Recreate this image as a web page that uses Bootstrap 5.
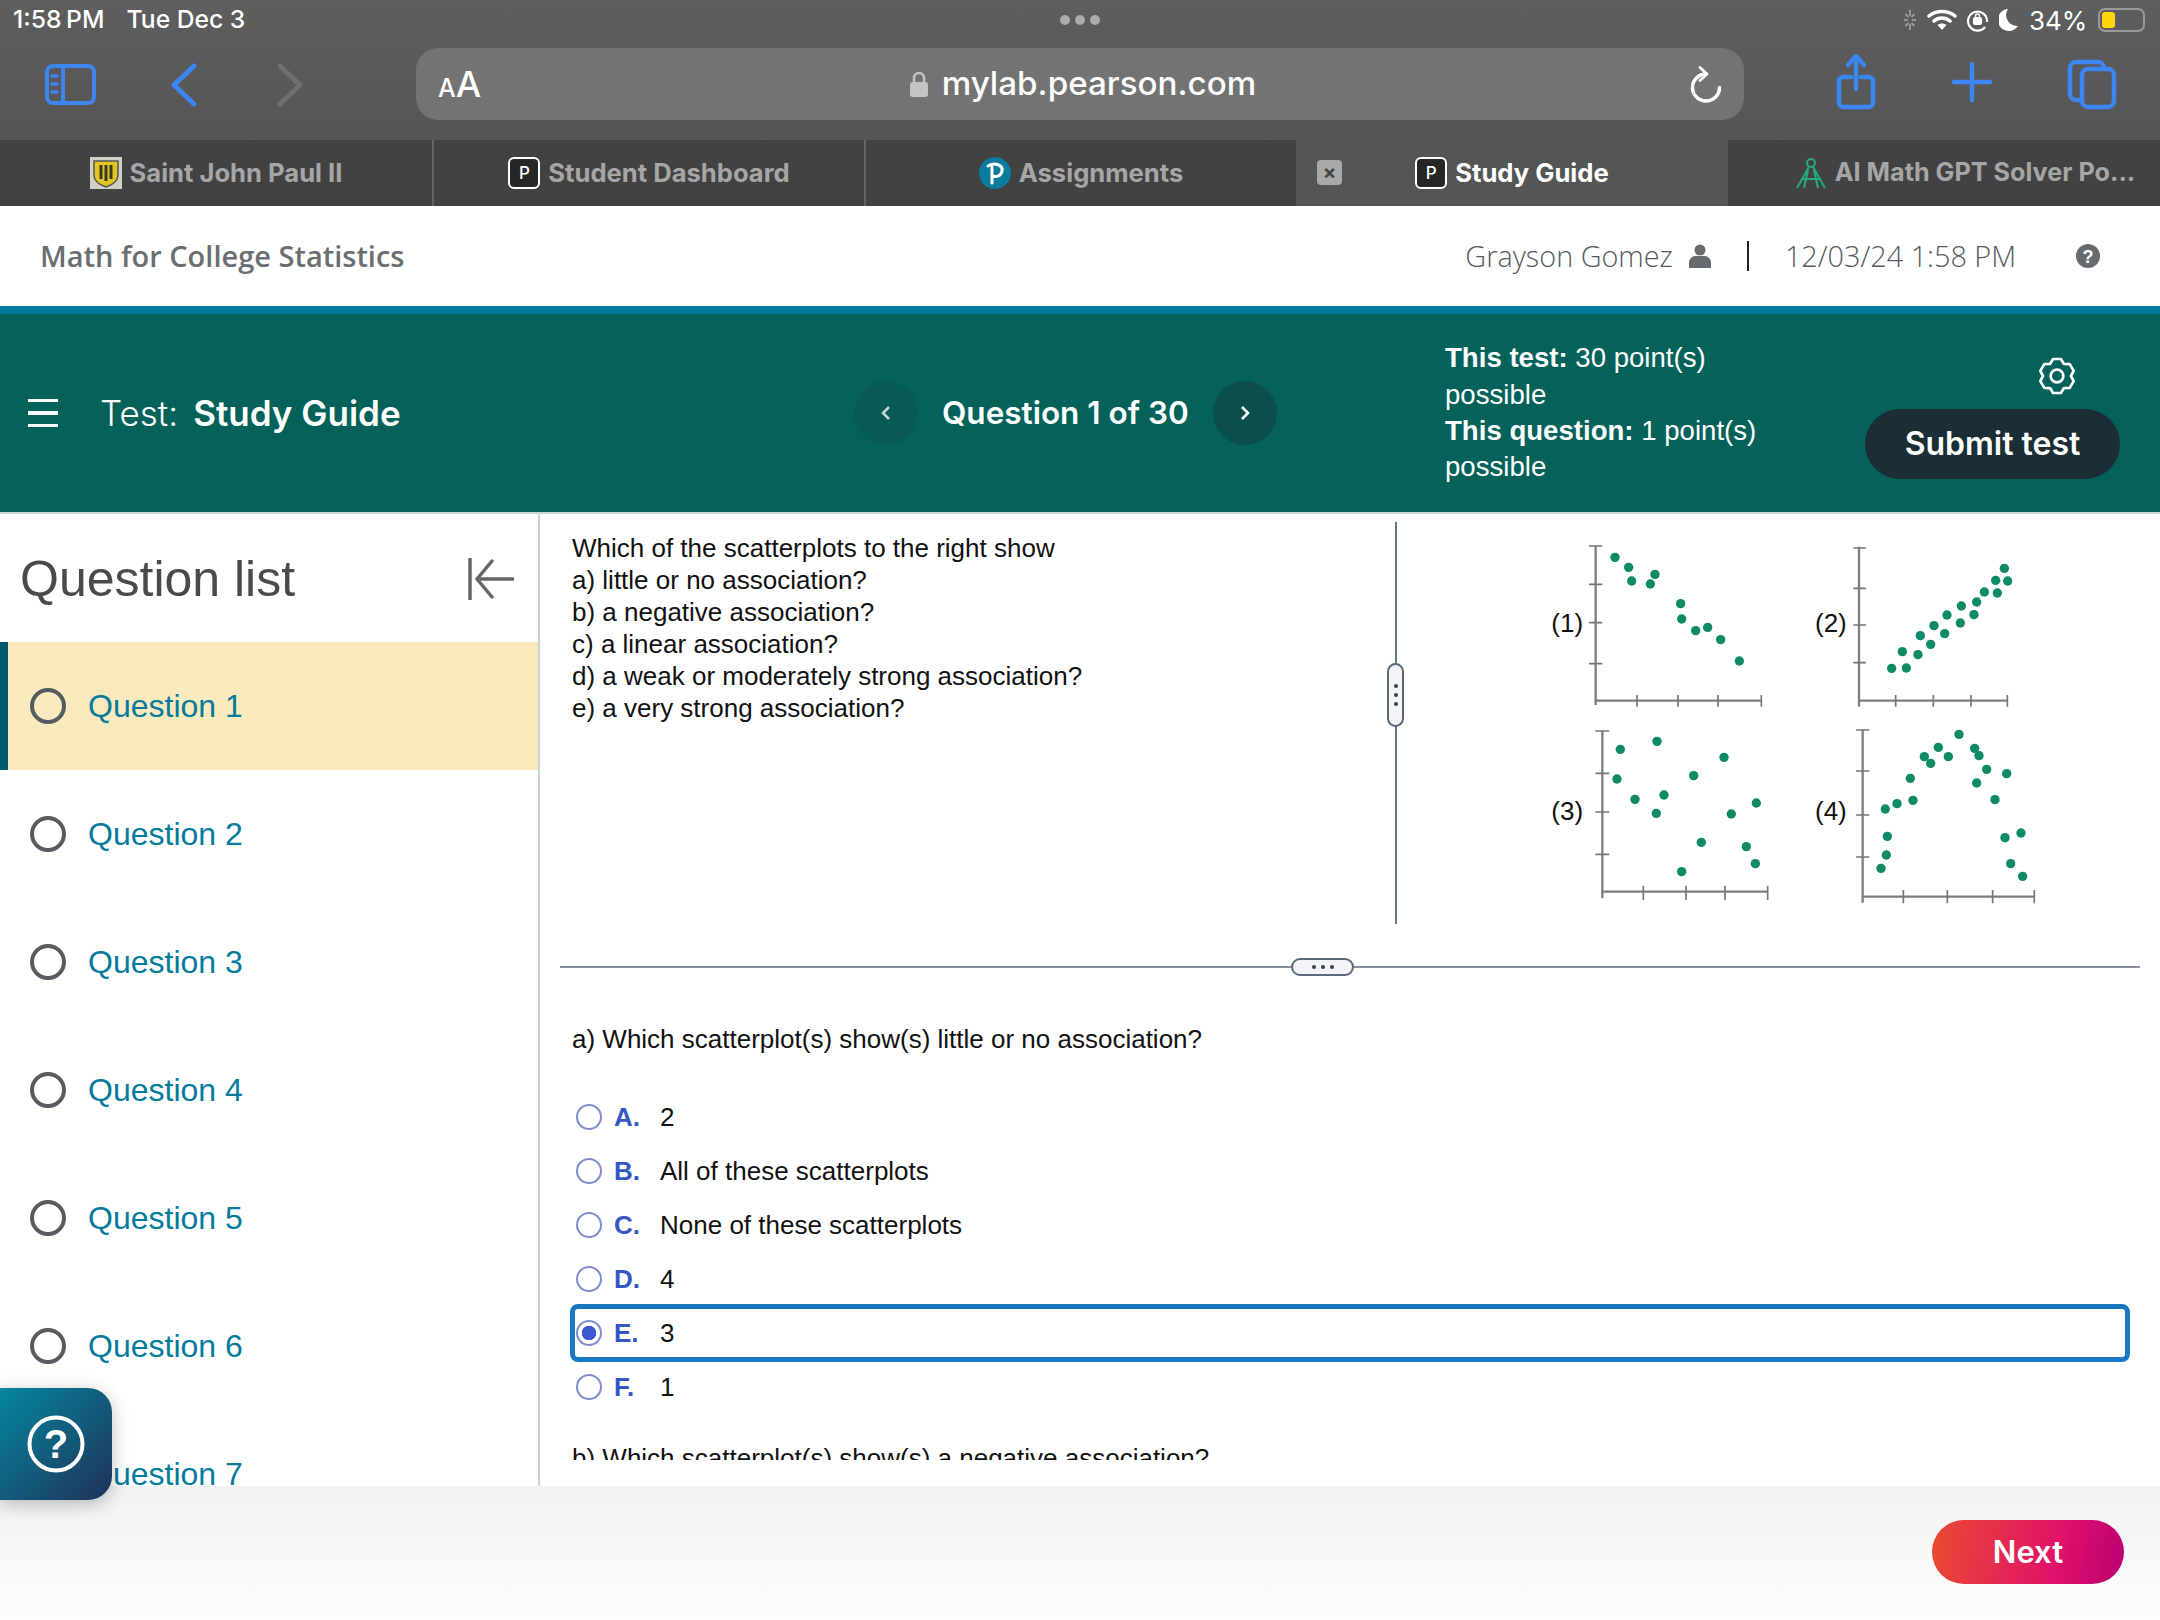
<!DOCTYPE html>
<html lang="en">
<head>
<meta charset="utf-8">
<title>Study Guide</title>
<link href="https://cdn.jsdelivr.net/npm/bootstrap@5.3.0/dist/css/bootstrap.min.css" rel="stylesheet">
<style>
html,body{height:100%;margin:0;overflow:hidden;background:#fff}
.app{width:2160px;height:1620px;position:relative;font-family:"Liberation Sans",Arial,sans-serif}
.chrome-top{height:140px;background:linear-gradient(#5e5e5e,#555);color:#fff;font-family:Inter,sans-serif}
.status-row{height:40px;padding:0 13px;font-size:24.7px;font-weight:500}
.status-time{margin-right:22px;word-spacing:-2px}
.status-mid{left:1060px;top:15px;gap:5px}
.status-mid i{display:block;width:10px;height:10px;border-radius:50%;background:#ababab}
.status-right{left:1903px;top:5px;height:30px;gap:10px;font-size:26px}
.batt{width:47px;height:24px;border:2px solid #9a9a9a;border-radius:7px;padding:2px;margin-left:1px}
.batt i{display:block;width:13px;height:100%;background:#ffd60a;border-radius:3px}
.tool-row{height:100px}
.tool-ic{left:0;top:0}
.tool-right{left:1820px}
.addr{left:416px;top:8px;width:1328px;height:72px;border-radius:22px;background:#737373;padding:0 22px 0 22px}
.aa{font-size:36px;font-weight:500;line-height:1}
.aa small{font-size:25px}
.addr-url{left:6px;right:0;top:0;bottom:0;gap:14px;font-size:33.2px;font-weight:500}
.tabs-row{height:66px;background:#424242;font-family:Inter,sans-serif;font-size:25.6px;font-weight:700;color:#a6a6a6}
.tab-cell{width:432px;position:relative;gap:8px;white-space:nowrap}
.tab-cell:nth-child(2),.tab-cell:nth-child(3){border-left:2px solid #646464}
.tab-now{background:#555;color:#fff}
.tab-last{padding-left:42px;font-size:25.2px}
.tab-x{position:absolute;left:21px;top:20px;width:25px;height:25px;background:#a9a9a9;border-radius:4px;color:#444;font-size:20px;line-height:24px;text-align:center}
.p-box{width:32px;height:32px;border:2px solid #fff;border-radius:6px;background:#262626;color:#fff;font-size:17px;font-weight:500;line-height:28px;text-align:center;flex:none}
.page-head{height:100px;padding:0 60px 0 40px;font-family:"Open Sans",sans-serif;font-size:28.8px;font-weight:300;color:#565a5e}
.page-title{font-size:29px;font-weight:600;color:#6a6e71}
.head-bar{width:2px;height:30px;background:#222;margin:0 36px}
.head-help{margin-left:60px}
.band{height:208px;border-top:8px solid #007a9c;border-bottom:2px solid #c9d6d6;background:#05625a;color:#fff;font-family:Inter,sans-serif}
.band-left{width:854px;padding-left:28px;font-size:35px}
.burger{width:30px;gap:9px;margin-right:42px}
.burger i{display:block;height:3.5px;background:#fff}
.band-left span{font-weight:300;margin-right:15px}
.band-left b{font-weight:600}
.band-nav{width:591px;gap:24px;font-size:31.5px;font-weight:600}
.round-btn{width:64px;height:64px;border-radius:50%;padding:0;background:#0a4f4c;border:0;flex:none}
.round-dim{background:#085a54}
.band-pts{width:420px;font-family:"Liberation Sans",sans-serif;font-size:27.6px;line-height:36.3px;font-weight:400}
.band-pts b{font-weight:700}
.band-act{width:255px;margin-top:10px}
.btn-submit{width:255px;height:70px;background:#1b2d35;color:#fff;font-size:32px;font-weight:600;border:0;margin-top:14px}
.gear-shift{transform:translateX(64px)}
.main-row{height:972px;overflow:hidden}
.side{width:540px;flex:none;border-right:2px solid #c9d0e0;font-family:"Liberation Sans",sans-serif}
.side-head{height:128px;flex:none;padding:2px 24px 0 20px;font-size:50px;color:#4a4a4a}
.list-group .q-item{height:128px;padding:0 0 0 30px;gap:22px;border:0;font-size:32px;color:#047a9c;flex:none}
.q-item i{display:block;width:36px;height:36px;border-radius:50%;border:4px solid #565b60;flex:none}
.list-group .q-now{background:#f9e9bc;border-left:8px solid #005a70;padding-left:22px}
.pane{flex:1;min-width:0}
.upper{height:452px;flex:none;font-size:26px;line-height:32px;color:#111}
.upper-text{width:855px;padding:18px 0 0 32px;flex:none}
.v-rule{width:2px;height:402px;margin-top:8px;background:#6b7683;position:relative;flex:none}
.v-grip{position:absolute;left:-8px;top:141px;width:17px;height:64px;background:#f2f4f7;border:2px solid #5a6a7a;border-radius:9px;gap:5px}
.v-grip i,.h-grip i{display:block;width:4px;height:4px;border-radius:50%;background:#34404c}
.fig{width:560px;height:420px;margin:6px 0 0 103px;flex:none}
.fig text{font-family:"Liberation Sans",sans-serif;font-size:78px;fill:#111}
.fig .ax{stroke:#7f7f7f;stroke-width:7;fill:none}
.fig .tk{stroke:#777;stroke-width:5;fill:none}
.fig circle{fill:#0f8a66}
.h-rule{height:2px;margin:0 20px;background:#8590a0;position:relative;flex:none}
.h-grip{position:absolute;left:731px;top:-8px;width:63px;height:18px;background:#f2f4f7;border:2px solid #5a6a7a;border-radius:9px;gap:5px}
.lower{height:492px;overflow:hidden;padding:55px 32px 0 32px;font-size:26px;line-height:32px;color:#111;flex:none}
.ask{margin-bottom:35px}
.opt{height:54px;padding-left:4px}
.opt input{width:26px;height:26px;margin:0 12px 0 0;border:2.5px solid #7d8cd0;background:#fff;flex:none}
.opt input:checked{background-color:#fff;background-image:radial-gradient(circle,#3a5ad2 0 7px,#fff 7.5px);border-color:#7d8cd0}
.opt b{width:46px;color:#3557c4;flex:none}
.opt-on{outline:5px solid #1a78c2;outline-offset:-3px;border-radius:6px}
.ask-b{margin-top:28px}
.foot{height:134px;background:linear-gradient(#f1f2f3,#fdfdfd);padding:34px 36px 0 0}
.btn-next{width:192px;height:64px;background:linear-gradient(100deg,#ea4b2f,#e0116a 65%,#b80072);color:#fff;border:0;font-family:Inter,sans-serif;font-size:31px;font-weight:600}
.help-fab{position:absolute;left:0;top:1388px;width:112px;height:112px;border-radius:0 24px 24px 0;background:linear-gradient(135deg,#05869f,#1f3158);box-shadow:0 4px 18px rgba(0,0,0,.25)}
.help-fab text{font-family:"Liberation Sans",sans-serif;font-size:40px;font-weight:700;fill:#fff}
</style>
</head>
<body>
<div class="app d-flex flex-column">

  <div class="chrome-top position-relative">
    <div class="status-row d-flex align-items-center">
      <span class="status-time">1:58 PM</span><span>Tue Dec 3</span>
    </div>
    <div class="status-mid position-absolute d-flex"><i></i><i></i><i></i></div>
    <div class="status-right position-absolute d-flex align-items-center">
      <svg width="14" height="22" viewBox="0 0 14 22" stroke="#a8a8a8" stroke-width="1.6"><path d="M7 1v6M7 15v6M1 11h4M9 11h4M2.5 5l3 3M8.5 14l3 3M11.500 5l-3 3M5.500 14l-3 3"/></svg>
      <svg width="30" height="24" viewBox="0 0 30 24" fill="none" stroke="#fff" stroke-width="3.500" stroke-linecap="round"><path d="M2 8c7-6 19-6 26 0M7 13c4.500-4 11.500-4 16 0"/><path d="M15 22l-4.500-5c2.500-2 6.500-2 9 0z" fill="#fff" stroke="none"/></svg>
      <svg width="22" height="24" viewBox="0 0 22 24" fill="none" stroke="#fff" stroke-width="2.200"><path d="M18 19a9.500 9.500 0 1 1 2-7v2"/><rect x="7" y="10" width="7" height="6" rx="1" fill="#fff"/><path d="M8.500 10V8a2 2 0 0 1 4 0v2" stroke-width="1.500"/></svg>
      <svg width="20" height="24" viewBox="0 0 20 24"><path d="M9 1a11 11 0 0 0 10 17A11 11 0 1 1 9 1z" fill="#fff"/></svg>
      <span>34%</span>
      <span class="batt"><i></i></span>
    </div>
    <div class="tool-row position-relative">
      <svg class="tool-ic position-absolute" width="420" height="100" viewBox="0 0 420 100" fill="none" stroke-linecap="round" stroke-linejoin="round">
        <g stroke="#3d85f0" stroke-width="4">
          <rect x="47" y="26" width="47" height="37" rx="6"/><path d="M63 26v37"/><path d="M52 36h5M52 44h5M52 52h5" stroke-width="3.500"/>
          <path d="M194 26l-20 19 20 19" stroke-width="5"/>
        </g>
        <path d="M280 26l20 19-20 19" stroke="#6f6f6f" stroke-width="5"/>
      </svg>
      <div class="addr position-absolute d-flex align-items-center justify-content-between">
        <div class="position-absolute addr-url d-flex align-items-center justify-content-center">
          <svg width="18" height="26" viewBox="0 0 18 26"><path d="M4 11V7a5 5 0 0 1 10 0v4" fill="none" stroke="#c4c4c4" stroke-width="2.500"/><rect y="11" width="18" height="15" rx="3" fill="#c4c4c4"/></svg>
          <span>mylab.pearson.com</span>
        </div>
        <span class="aa position-relative"><small>A</small>A</span>
        <svg class="position-relative" width="32" height="38" viewBox="0 0 32 38" fill="none" stroke="#fff" stroke-width="3.500" stroke-linecap="round" stroke-linejoin="round"><path d="M16 9A13.500 13.500 0 1 0 29.500 22.500"/><path d="M10 2.500l7 6.500-7 6.500" stroke-width="3"/></svg>
      </div>
      <svg class="tool-ic tool-right position-absolute" width="320" height="100" viewBox="0 0 320 100" fill="none" stroke="#3d85f0" stroke-width="4.500" stroke-linecap="round" stroke-linejoin="round">
        <path d="M26 40h-8a4 4 0 0 0-4 4v22a4 4 0 0 0 4 4h26a4 4 0 0 0 4-4V44a4 4 0 0 0-4-4h-8M31 52V20M23 28l8-9 8 9" transform="translate(5 -3)"/>
        <path d="M152 24v36M134 42h36"/>
        <rect x="262" y="29" width="32" height="38" rx="6"/>
        <path d="M262 60h-6a6 6 0 0 1-6-6V28a6 6 0 0 1 6-6h22a6 6 0 0 1 6 6v1"/>
      </svg>
    </div>
  </div>

  <div class="tabs-row d-flex">
    <div class="tab-cell d-flex align-items-center justify-content-center">
      <svg width="32" height="32" viewBox="0 0 32 32"><rect width="32" height="32" fill="#cfcfc4"/><path d="M4 4h24v14c0 7-6 10-12 12C10 28 4 25 4 18z" fill="#e2c520" stroke="#555" stroke-width="1.500"/><path d="M11 8v14M16 8v16M21 8v14" stroke="#3a3a20" stroke-width="3"/></svg>
      <span>Saint John Paul II</span>
    </div>
    <div class="tab-cell d-flex align-items-center justify-content-center">
      <span class="p-box">P</span><span>Student Dashboard</span>
    </div>
    <div class="tab-cell d-flex align-items-center justify-content-center">
      <svg width="32" height="32" viewBox="0 0 32 32"><circle cx="16" cy="16" r="16" fill="#0a7ca0"/><path d="M9 9c7-4 15-1 14 5s-7 6-10 5M13 10v16" fill="none" stroke="#fff" stroke-width="3" stroke-linecap="round"/></svg>
      <span>Assignments</span>
    </div>
    <div class="tab-cell tab-now d-flex align-items-center justify-content-center">
      <span class="tab-x">×</span>
      <span class="p-box">P</span><span>Study Guide</span>
    </div>
    <div class="tab-cell tab-last d-flex align-items-center justify-content-center">
      <svg width="32" height="32" viewBox="0 0 32 32" fill="none" stroke="#27a97a" stroke-width="2"><circle cx="16" cy="6" r="4"/><path d="M14 10L2 31M18 10l12 21M7 22h18M13 13l-4 18M19 13l4 18"/></svg>
      <span>AI Math GPT Solver Po...</span>
    </div>
  </div>

  <header class="page-head d-flex align-items-center justify-content-between bg-white">
    <div class="page-title">Math for College Statistics</div>
    <div class="d-flex align-items-center">
      <span>Grayson Gomez</span>
      <svg class="ms-3" width="22" height="24" viewBox="0 0 22 24" fill="#666b70"><circle cx="11" cy="6" r="5.500"/><path d="M0 24v-5c0-4 3-7 6-7h10c3 0 6 3 6 7v5z"/></svg>
      <span class="head-bar"></span>
      <span>12/03/24 1:58 PM</span>
      <svg class="head-help" width="24" height="24" viewBox="0 0 24 24"><circle cx="12" cy="12" r="12" fill="#666b70"/><text x="12" y="18.500" text-anchor="middle" font-family="Liberation Sans" font-weight="700" font-size="18" fill="#fff">?</text></svg>
    </div>
  </header>

  <section class="band d-flex align-items-center">
    <div class="band-left d-flex align-items-center">
      <div class="burger d-flex flex-column"><i></i><i></i><i></i></div>
      <span>Test:</span><b>Study Guide</b>
    </div>
    <div class="band-nav d-flex align-items-center">
      <button class="round-btn round-dim d-flex align-items-center justify-content-center" type="button" aria-label="Previous"><svg width="10" height="16" viewBox="0 0 10 16" fill="none" stroke="#c8d8d6" stroke-width="2.500"><path d="M8 2L2 8l6 6"/></svg></button>
      <span>Question 1 of 30</span>
      <button class="round-btn d-flex align-items-center justify-content-center" type="button" aria-label="Next"><svg width="10" height="16" viewBox="0 0 10 16" fill="none" stroke="#fff" stroke-width="2.500"><path d="M2 2l6 6-6 6"/></svg></button>
    </div>
    <div class="band-pts">
      <b>This test:</b> 30 point(s)<br>possible<br><b>This question:</b> 1 point(s)<br>possible
    </div>
    <div class="band-act d-flex flex-column align-items-center">
      <svg class="gear-shift" width="38" height="38" viewBox="0 0 24 24" fill="none" stroke="#fff" stroke-width="1.700" stroke-linejoin="round"><path d="M9.530 1.280L14.470 1.280L16.400 4.380L20.040 4.500L22.520 8.780L20.800 12L22.520 15.220L20.040 19.500L16.400 19.620L14.470 22.720L9.530 22.720L7.600 19.620L3.960 19.500L1.480 15.220L3.200 12L1.480 8.780L3.960 4.500L7.600 4.380Z"/><circle cx="12" cy="12" r="4"/></svg>
      <button class="btn btn-submit rounded-pill" type="button">Submit test</button>
    </div>
  </section>

  <main class="main-row d-flex">
    <aside class="side d-flex flex-column">
      <div class="side-head d-flex align-items-center justify-content-between">
        <span>Question list</span>
        <svg width="46" height="42" viewBox="0 0 46 42" fill="none" stroke="#666" stroke-width="3.500" stroke-linecap="round" stroke-linejoin="round"><path d="M2 1v40M45 21H13M24 3L9 21l15 18"/></svg>
      </div>
      <div class="list-group list-group-flush rounded-0">
        <div class="list-group-item q-item q-now d-flex align-items-center"><i></i>Question 1</div>
        <div class="list-group-item q-item d-flex align-items-center"><i></i>Question 2</div>
        <div class="list-group-item q-item d-flex align-items-center"><i></i>Question 3</div>
        <div class="list-group-item q-item d-flex align-items-center"><i></i>Question 4</div>
        <div class="list-group-item q-item d-flex align-items-center"><i></i>Question 5</div>
        <div class="list-group-item q-item d-flex align-items-center"><i></i>Question 6</div>
        <div class="list-group-item q-item d-flex align-items-center"><i></i>Question 7</div>
      </div>
    </aside>

    <div class="pane d-flex flex-column">
      <div class="upper d-flex">
        <div class="upper-text">Which of the scatterplots to the right show<br>a) little or no association?<br>b) a negative association?<br>c) a linear association?<br>d) a weak or moderately strong association?<br>e) a very strong association?</div>
        <div class="v-rule"><div class="v-grip d-flex flex-column align-items-center justify-content-center"><i></i><i></i><i></i></div></div>
        <svg class="fig" viewBox="0 0 1680 1260">
          <g transform="translate(60 30)">
            <text x="94" y="307">(1)</text>
            <path class="ax" d="M227 48V525M227 512H724"/>
            <path class="tk" d="M207 48H247M207 163H247M207 278H247M207 401H247M351 495V530M474 495V530M594 495V530M724 495V530"/>
            <circle cx="285" cy="82" r="14"/><circle cx="326" cy="112" r="14"/><circle cx="335" cy="153" r="14"/><circle cx="405" cy="133" r="14"/><circle cx="391" cy="162" r="14"/><circle cx="482" cy="221" r="14"/><circle cx="485" cy="267" r="14"/><circle cx="527" cy="302" r="14"/><circle cx="563" cy="292" r="14"/><circle cx="602" cy="329" r="14"/><circle cx="658" cy="393" r="14"/>
          </g>
          <g transform="translate(840 30)">
            <text x="105" y="307">(2)</text>
            <path class="ax" d="M237 50V530M237 512H682"/>
            <path class="tk" d="M220 54H258M220 175H258M220 285H258M220 398H258M347 495V530M460 495V530M573 495V530M682 495V530"/>
            <circle cx="335" cy="415" r="14"/><circle cx="379" cy="414" r="14"/><circle cx="367" cy="365" r="14"/><circle cx="414" cy="374" r="14"/><circle cx="421" cy="317" r="14"/><circle cx="452" cy="343" r="14"/><circle cx="462" cy="287" r="14"/><circle cx="494" cy="311" r="14"/><circle cx="501" cy="255" r="14"/><circle cx="541" cy="279" r="14"/><circle cx="544" cy="228" r="14"/><circle cx="582" cy="254" r="14"/><circle cx="590" cy="216" r="14"/><circle cx="613" cy="186" r="14"/><circle cx="652" cy="189" r="14"/><circle cx="647" cy="151" r="14"/><circle cx="683" cy="153" r="14"/><circle cx="673" cy="115" r="14"/>
          </g>
          <g transform="translate(60 600)">
            <text x="94" y="300">(3)</text>
            <path class="ax" d="M247 33V535M247 515H744"/>
            <path class="tk" d="M226 33H268M226 160H268M226 276H268M226 403H268M370 497V540M498 497V540M615 497V540M743 497V540"/>
            <circle cx="301" cy="88" r="14"/><circle cx="411" cy="64" r="14"/><circle cx="612" cy="112" r="14"/><circle cx="521" cy="167" r="14"/><circle cx="291" cy="177" r="14"/><circle cx="345" cy="238" r="14"/><circle cx="432" cy="225" r="14"/><circle cx="409" cy="280" r="14"/><circle cx="634" cy="282" r="14"/><circle cx="709" cy="249" r="14"/><circle cx="544" cy="367" r="14"/><circle cx="679" cy="380" r="14"/><circle cx="706" cy="431" r="14"/><circle cx="485" cy="455" r="14"/>
          </g>
          <g transform="translate(840 600)">
            <text x="105" y="300">(4)</text>
            <path class="ax" d="M248 30V548M248 530H763"/>
            <path class="tk" d="M228 30H268M228 153H268M228 285H268M228 411H268M370 510V550M502 510V550M638 510V550M763 510V550"/>
            <circle cx="537" cy="43" r="14"/><circle cx="475" cy="82" r="14"/><circle cx="433" cy="110" r="14"/><circle cx="452" cy="130" r="14"/><circle cx="505" cy="110" r="14"/><circle cx="584" cy="85" r="14"/><circle cx="597" cy="107" r="14"/><circle cx="620" cy="148" r="14"/><circle cx="680" cy="161" r="14"/><circle cx="590" cy="189" r="14"/><circle cx="645" cy="239" r="14"/><circle cx="391" cy="175" r="14"/><circle cx="399" cy="241" r="14"/><circle cx="351" cy="251" r="14"/><circle cx="316" cy="267" r="14"/><circle cx="322" cy="349" r="14"/><circle cx="319" cy="405" r="14"/><circle cx="303" cy="445" r="14"/><circle cx="723" cy="339" r="14"/><circle cx="675" cy="353" r="14"/><circle cx="692" cy="431" r="14"/><circle cx="728" cy="469" r="14"/>
          </g>
        </svg>
      </div>
      <div class="h-rule"><div class="h-grip d-flex align-items-center justify-content-center"><i></i><i></i><i></i></div></div>
      <div class="lower">
        <div class="ask">a) Which scatterplot(s) show(s) little or no association?</div>
        <label class="opt d-flex align-items-center"><input class="form-check-input" type="radio" name="a"><b>A.</b><span>2</span></label>
        <label class="opt d-flex align-items-center"><input class="form-check-input" type="radio" name="a"><b>B.</b><span>All of these scatterplots</span></label>
        <label class="opt d-flex align-items-center"><input class="form-check-input" type="radio" name="a"><b>C.</b><span>None of these scatterplots</span></label>
        <label class="opt d-flex align-items-center"><input class="form-check-input" type="radio" name="a"><b>D.</b><span>4</span></label>
        <label class="opt opt-on d-flex align-items-center"><input class="form-check-input" type="radio" name="a" checked><b>E.</b><span>3</span></label>
        <label class="opt d-flex align-items-center"><input class="form-check-input" type="radio" name="a"><b>F.</b><span>1</span></label>
        <div class="ask-b">b) Which scatterplot(s) show(s) a negative association?</div>
      </div>
    </div>
  </main>

  <footer class="foot d-flex justify-content-end align-items-start">
    <button class="btn btn-next rounded-pill" type="button">Next</button>
  </footer>

  <div class="help-fab d-flex align-items-center justify-content-center">
    <svg width="58" height="58" viewBox="0 0 58 58"><circle cx="29" cy="29" r="26.500" fill="none" stroke="#fff" stroke-width="4"/><text x="29" y="43" text-anchor="middle">?</text></svg>
  </div>
</div>
<script src="https://cdn.jsdelivr.net/npm/bootstrap@5.3.0/dist/js/bootstrap.bundle.min.js"></script>
</body>
</html>
